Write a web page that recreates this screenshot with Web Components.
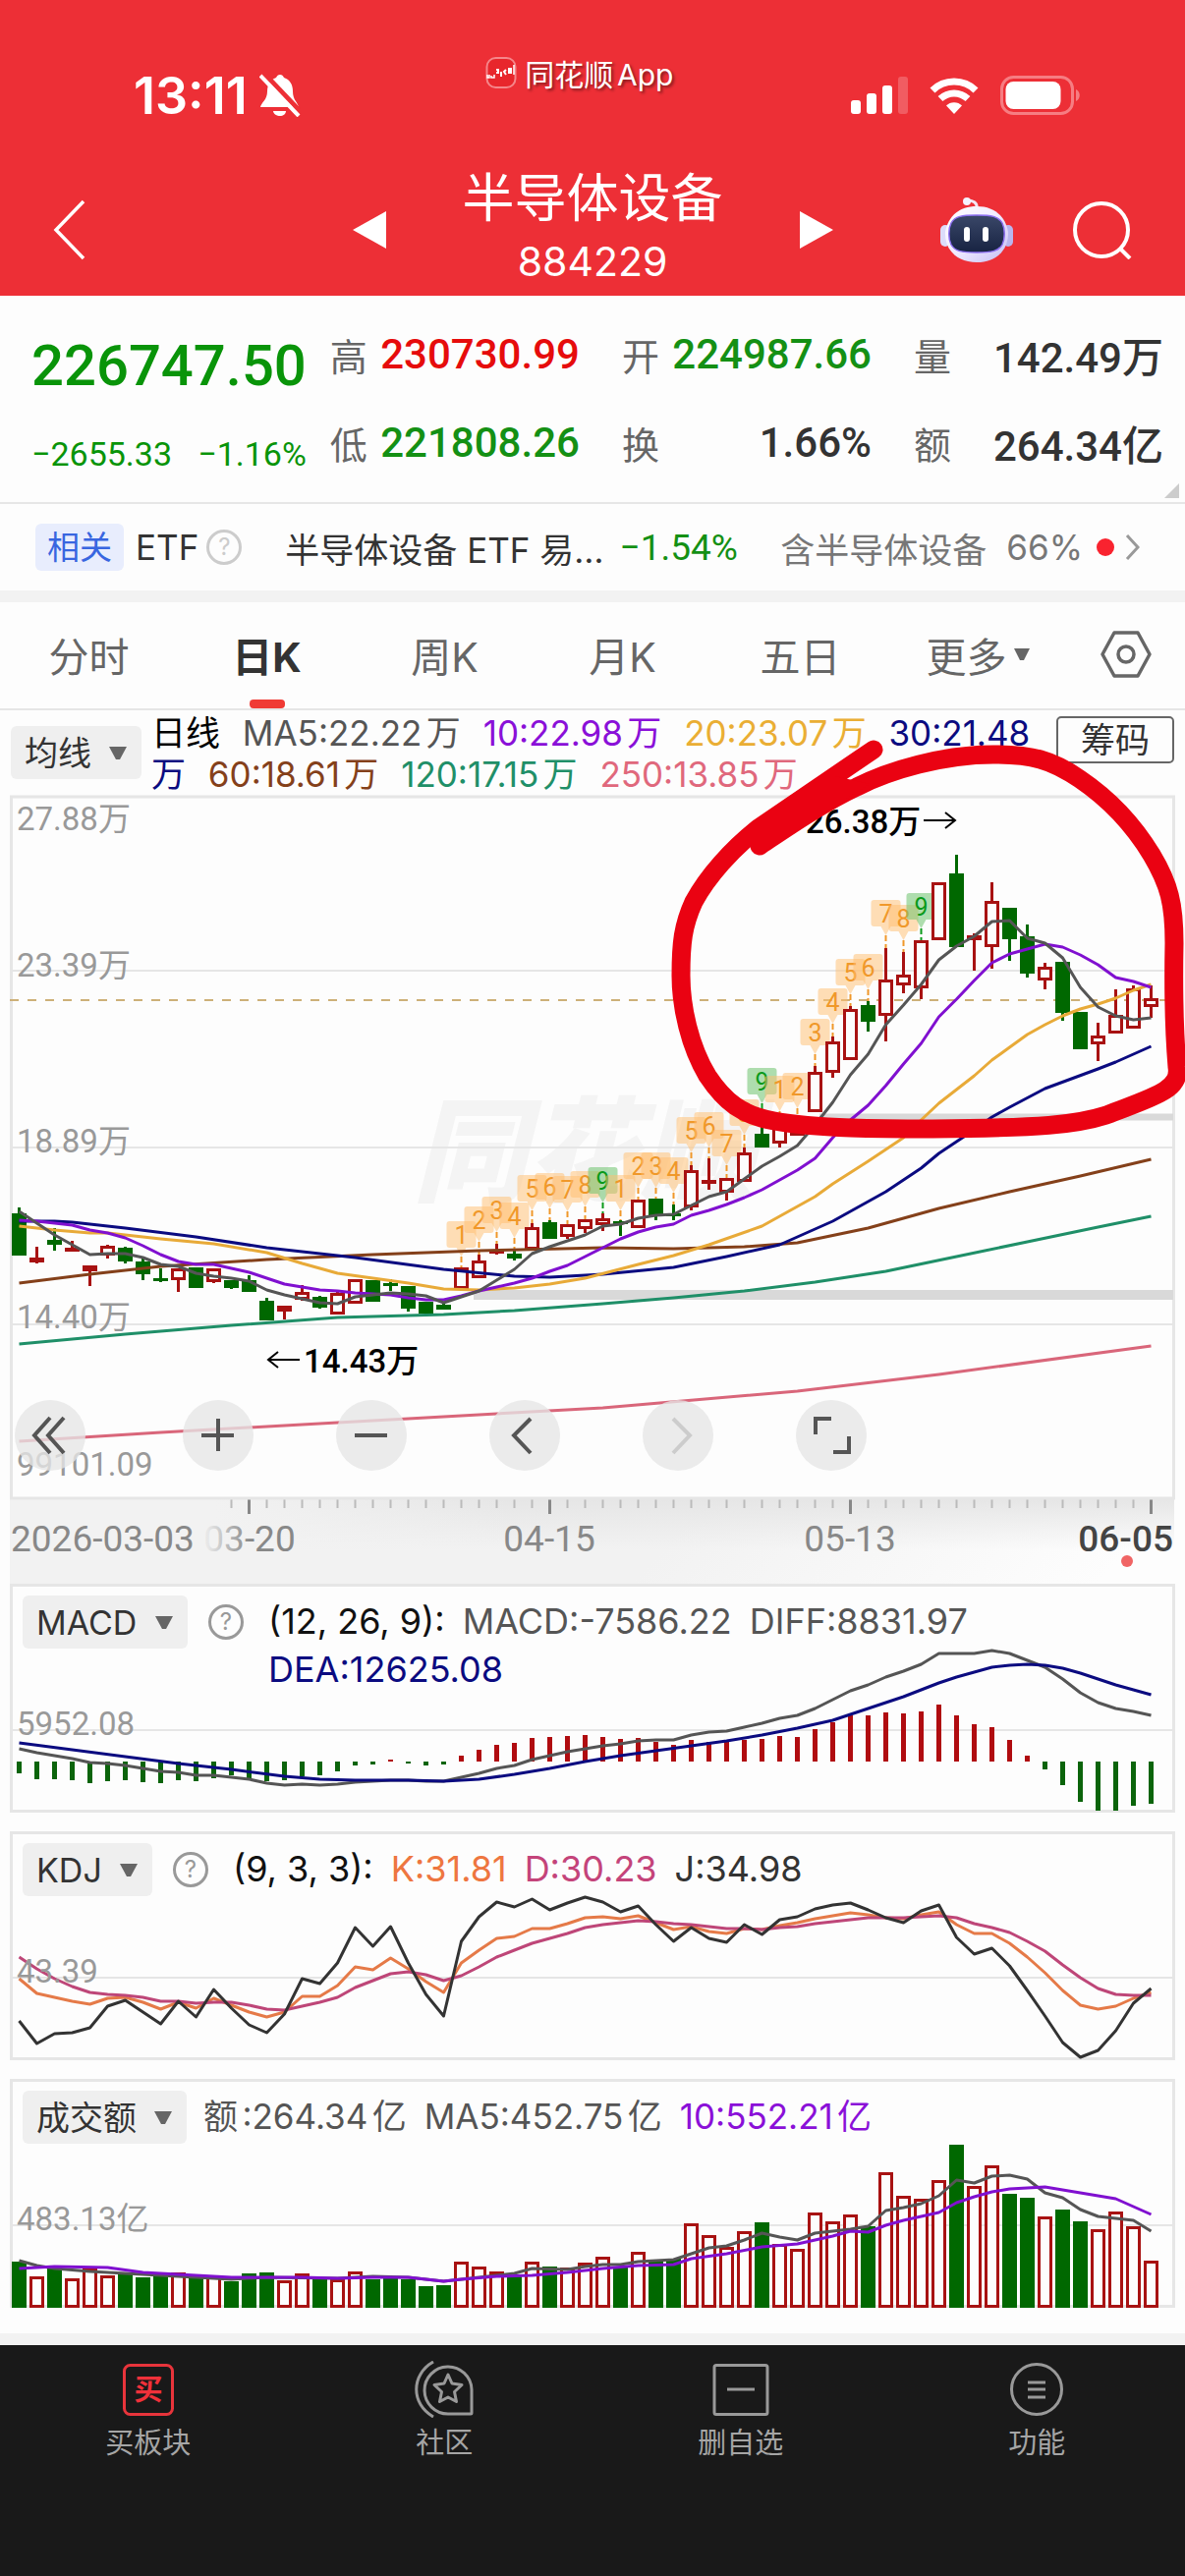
<!DOCTYPE html>
<html lang="zh-CN">
<head>
<meta charset="utf-8">
<meta name="viewport" content="width=device-width, initial-scale=1">
<title>半导体设备 884229</title>
<style>
    body {
        margin: 0;
        min-height: 100vh;
        display: flex;
        flex-direction: column;
        background: #fdfdfd;
        color: #333;
        font-family: Inter, "Noto Sans CJK SC", sans-serif;
        text-autospace: normal;
        overflow-x: hidden;
        --red: #ed2f36;
        --up: #a81212;
        --down: #006800;
        --line: #e6e6e6;
        --num: Roboto, "Noto Sans CJK SC", sans-serif;
    }
</style>
</head>
<body>
<status-bar time="13:11">同花顺App</status-bar>
<stock-header name="半导体设备" code="884229"></stock-header>
<quote-board></quote-board>
<related-row></related-row>
<period-tabs></period-tabs>
<ma-legend></ma-legend>
<kline-chart></kline-chart>
<date-axis></date-axis>
<indicator-panel name="MACD" kind="macd" help level="5952.08">
    <span style="color:#111">(12, 26, 9):</span>
    <span style="color:#555">MACD:-7586.22</span>
    <span style="color:#555">DIFF:8831.97</span>
    <span style="color:#0b0b80">DEA:12625.08</span>
</indicator-panel>
<indicator-panel name="KDJ" kind="kdj" help level="43.39">
    <span style="color:#111">(9, 3, 3):</span>
    <span style="color:#ee7640">K:31.81</span>
    <span style="color:#c4447a">D:30.23</span>
    <span style="color:#333">J:34.98</span>
</indicator-panel>
<indicator-panel name="成交额" kind="volume" level="483.13亿">
    <span style="color:#555">额:264.34亿</span>
    <span style="color:#555">MA5:452.75亿</span>
    <span style="color:#8a10d8">10:552.21亿</span>
</indicator-panel>
<tab-bar></tab-bar>

<script>
// ---- chart data: one entry per trading day, y values in chart units ----

const STEP = 18;
const FIRST = 19.5;
const px = i => FIRST + i * STEP;

// [direction, body top, body bottom, high, low]
const candles = [
    ['d',425,468,419,468],['u',470,475,459,476],['d',452,457,440,463],['u',460,463,453,463],['u',478,484,478,499],
    ['u',458,468,457,471],['d',460,474,459,476],['d',474,487,470,493],['d',491,494,481,495],['u',481,493,481,505],
    ['d',480,501,480,501],['u',481,495,481,496],['d',493,501,493,502],['d',493,505,488,505],['d',514,534,511,534],
    ['u',519,525,519,533],['u',505,513,498,514],['d',510,521,509,522],['u',506,528,504,528],['u',492,517,492,517],
    ['d',493,515,493,515],['d',496,499,492,504],['d',499,522,499,525],['d',515,527,515,527],['d',518,523,515,523],
    ['u',480,502,480,502],['u',473,491,467,491],['u',462,465,456,467],['d',466,471,463,473],['u',439,462,435,462],
    ['d',434,451,432,451],['u',436,449,436,451],['u',431,441,431,445],['u',430,437,425,443],['d',433,436,432,448],
    ['u',411,440,411,440],['d',410,427,410,432],['d',425,428,416,432],['u',381,419,376,422],['u',391,395,369,401],
    ['u',389,404,389,412],['u',363,393,358,393],['d',344,358,335,358],['u',336,354,336,358],['u',327,346,327,346],
    ['u',281,322,275,322],['u',250,282,245,287],['u',217,269,214,269],['d',213,230,209,240],['u',187,224,155,250],
    ['u',182,193,159,201],['u',147,196,147,207],['u',88,147,88,147],['d',79,154,60,154],['u',142,147,140,178],
    ['u',107,154,88,176],['d',114,146,114,168],['d',143,181,131,185],['u',174,188,170,197],['d',169,221,169,229],
    ['d',220,258,220,258],['u',244,253,231,270],['u',223,242,197,242],['u',196,237,193,237],['u',206,215,193,226]
];

const priceLines = [
    ['#d9667a', [[0,657],[8,648],[16,640],[24,632],[33,623],[44,606],[52,589],[64,560]]],
    ['#1f8f68', [[0,558],[6,548],[12,539],[18,531],[24,528],[28,524],[33,517],[37,511],[41,504],[45,495],[49,484],[53,469],[57,454],[61,439],[64,428]]],
    ['#84401a', [[0,496],[4,487],[8,479],[14,472],[20,467],[26,463],[33,460],[37,461],[41,459],[44,455],[48,440],[52,420],[56,403],[60,387],[64,370]]],
    ['#0b0b80', [[0,433],[2,433],[3,434],[6,440],[10,449],[14,460],[19,470],[24,482],[28,489],[30,490],[33,487],[37,480],[40,469],[43,457],[44,449],[46,433],[49,403],[51,379],[52,364],[53,352],[54,340],[55,327],[56,317],[58,298],[61,278],[62,271],[64,255]]],
    ['#e8aa38', [[0,438],[2,442],[4,445],[5,445],[8,451],[11,456],[14,465],[16,476],[18,486],[20,491],[22,496],[24,502],[26,503],[28,501],[30,497],[32,491],[35,477],[37,468],[39,457],[42,438],[45,408],[46,395],[48,372],[50,348],[51,330],[52,313],[53,299],[54,285],[55,269],[56,256],[57,243],[58,233],[59,224],[60,217],[61,212],[62,206],[63,198],[64,192]]],
    ['#8010d0', [432,433,435,437,442,445,450,458,467,474,477,477,481,485,491,497,500,503,504,506,507,508,511,513,513,509,504,500,496,491,484,478,469,460,451,444,439,436,427,422,416,409,401,391,381,369,348,330,315,295,273,252,225,207,188,170,161,156,151,154,162,172,185,189,195]],
    ['#555', [423,435,447,457,467,466,466,470,477,479,486,489,491,494,503,508,512,516,517,510,508,506,507,509,516,510,504,493,482,466,459,453,447,438,436,430,427,426,417,408,403,390,377,367,356,335,312,284,263,233,213,192,167,153,143,128,127,145,150,165,195,215,224,228,226]]
];

// nine-turn count tags: [day, count, tag top]
const counts = [
    [25,1,433],[26,2,418],[27,3,408],[28,4,414],[29,5,386],[30,6,384],[31,7,387],[32,8,382],[33,9,378],
    [34,1,386],[35,2,363],[36,3,363],[37,4,368],[38,5,327],[39,6,322],[40,7,340],[41,8,309],[42,9,277],
    [43,1,285],[44,2,282],[45,3,227],[46,4,196],[47,5,166],[48,6,161],[49,7,106],[50,8,111],[51,9,99]
];

const macd = {
    zero: 181,
    bars: [193,199,199,200,203,201,200,202,203,200,201,198,195,198,201,200,196,195,191,185,184,179,183,185,184,175,169,164,162,157,156,155,154,156,158,157,161,164,159,161,161,159,158,155,156,148,141,134,134,131,132,130,123,134,143,146,159,175,189,205,222,231,231,226,224],
    lines: [
        ['#555', [168,172,175,178,182,183,185,188,191,192,195,195,197,199,203,205,204,205,204,202,201,200,200,201,201,197,193,188,185,179,175,171,168,165,163,160,159,159,154,151,150,146,142,137,134,127,118,109,103,95,89,82,71,71,71,68,71,78,85,97,111,121,127,130,134]],
        ['#0b0b80', [[0,162],[3,169],[6,176],[9,183],[12,189],[15,196],[17,199],[19,200],[22,200],[24,201],[26,199],[28,194],[30,188],[32,181],[34,175],[36,170],[38,165],[40,160],[42,154],[44,147],[46,139],[48,127],[50,115],[52,101],[53,95],[54,90],[55,85],[56,83],[57,82],[58,83],[59,86],[60,91],[61,97],[62,103],[63,108],[64,113]]]
    ]
};

const kdj = {
    lines: [
        ['#e57a48', [150,165,169,173,176,170,169,174,181,174,180,170,177,184,189,184,168,168,157,138,141,129,140,153,164,134,121,109,107,99,99,94,88,87,89,86,93,100,97,102,104,99,100,96,93,89,86,83,85,88,89,85,82,95,104,104,114,128,144,162,177,181,178,170,164]],
        ['#be4678', [128,140,150,158,164,166,167,169,173,173,175,174,174,177,181,182,178,174,169,159,152,145,143,146,152,147,138,128,121,114,109,104,98,95,93,91,92,94,95,97,99,99,100,98,97,94,92,90,88,88,88,87,86,88,94,98,103,112,122,136,149,160,166,167,167]],
        ['#333', [193,216,206,205,200,178,172,184,196,173,189,161,180,197,205,186,150,155,134,98,117,97,134,166,188,112,87,72,77,69,80,73,67,72,82,76,95,112,98,109,113,95,105,90,87,79,75,73,80,88,93,81,75,108,125,119,137,162,188,215,230,223,203,175,160]]
    ]
};

const volume = {
    base: 233,
    bars: 'd186 u201 d192 u203 u192 u200 d198 d202 d200 u197 d203 u201 d206 d198 d197 u205 u198 d204 u204 u196 d204 d203 d204 d211 d210 u186 u191 u196 d201 u186 d191 u192 u187 u181 d191 u176 d186 d183 u147 u159 u171 u155 d146 u168 u173 u136 u145 u138 d150 u95 u119 u122 u103 d67 u109 u88 d117 d121 u140 d133 d145 u153 u135 u150 u185'.split(' '),
    lines: [
        ['#555', [[0,185],[1,190],[2,193],[4,196],[6,198],[8,200],[10,202],[12,204],[14,202],[18,203],[20,201],[22,202],[24,206],[25,204],[27,200],[28,198],[29,193],[31,194],[32,191],[33,189],[34,189],[35,186],[37,184],[38,178],[39,172],[40,170],[41,164],[42,157],[43,161],[44,164],[45,157],[46,155],[47,153],[48,150],[49,134],[50,131],[51,127],[52,119],[53,103],[54,106],[55,99],[56,98],[57,102],[58,116],[59,121],[60,133],[61,140],[62,142],[63,144],[64,155]]],
        ['#8010d0', [[0,193],[2,191],[5,192],[7,197],[10,200],[12,202],[16,202],[18,203],[20,202],[22,202],[24,206],[25,204],[27,201],[29,200],[31,197],[33,193],[35,190],[37,189],[38,183],[40,178],[42,171],[44,168],[46,160],[47,155],[48,156],[49,149],[50,144],[51,140],[52,136],[53,126],[54,120],[55,115],[56,112],[57,111],[58,110],[59,113],[60,116],[62,122],[64,138]]]
    ]
};

// ---- drawing helpers ----

function drawLine([color, points]) {
    const pts = points.map((p, i) => Array.isArray(p) ? `${px(p[0])},${p[1]}` : `${px(i)},${p}`).join(' ');
    return `<polyline points="${pts}" fill="none" stroke="${color}" stroke-width="3" stroke-linejoin="round"/>`;
}

function drawCandle([dir, top, bottom, high, low], i) {
    const x = px(i);
    if (dir === 'd') {
        return `<path d="M${x} ${high}V${low}" stroke="var(--down)" stroke-width="3"/>
            <rect x="${x - 7.5}" y="${top}" width="15" height="${bottom - top}" fill="var(--down)"/>`;
    }
    const h = Math.max(bottom - top - 3, 1);
    return `<path d="M${x} ${high}V${top}M${x} ${bottom}V${low}" stroke="var(--up)" stroke-width="3"/>
        <rect x="${x - 6}" y="${top + 1.5}" width="12" height="${h}" fill="#fdfdfd" stroke="var(--up)" stroke-width="3"/>`;
}

function drawCount([i, n, top]) {
    const x = px(i);
    const nine = n === 9;
    const color = nine ? '#0a9a1a' : '#f0982a';
    const fill = nine ? 'rgba(110,195,110,.55)' : 'rgba(255,190,110,.5)';
    return `<path d="M${x - 12} ${top}h24q3 0 3 3v21q0 3 -3 3h-7l-5 9l-5 -9h-7q-3 0 -3 -3v-21q0 -3 3 -3z" fill="${fill}"/>
        <path d="M${x} ${top + 36}V${candles[i][3]}" stroke="${color}" stroke-width="2" stroke-dasharray="6 3"/>
        <text x="${x}" y="${top + 23}" font-size="25" text-anchor="middle" fill="${color}">${n}</text>`;
}

// ---- elements ----

class StatusBar extends HTMLElement {
    constructor() {
        super();
        this.attachShadow({ mode: 'open' });
    }

    connectedCallback() {
        this.shadowRoot.innerHTML = `
        <style>
            :host {
                display: flex;
                justify-content: space-between;
                align-items: center;
                height: 150px;
                padding: 22px 106px 0 136px;
                background: var(--red);
                color: #fff;
            }
            .side { display: flex; align-items: center; gap: 22px; }
            .time { font-size: 52px; font-weight: 600; }
            .left { gap: 12px; }
            .brand {
                display: flex;
                align-items: center;
                gap: 8px;
                margin-bottom: 46px;
                padding-left: 8px;
                font-size: 30px;
                text-shadow: 2px 2px 3px rgba(0,0,0,.45);
            }
            svg { display: block; }
        </style>
        <div class="side left">
            <span class="time">${this.getAttribute('time')}</span>
            <svg width="42" height="44" viewBox="0 0 42 44">
                <path d="M21 1c2 0 3 1 4 3c6 2 9 7 9 14c0 9 5 11 6 16H1c1-5 7-7 7-16c0-7 3-12 9-14c1-2 2-3 4-3z" fill="#fff"/>
                <path d="M14 38h13c0 3-3 5-6 5s-7-2-7-5z" fill="#fff"/>
                <path d="M5 0L43 40" stroke="#ed2f36" stroke-width="5"/>
                <path d="M1 2L40 43" stroke="#fff" stroke-width="4"/>
            </svg>
        </div>
        <div class="brand">
            <svg width="32" height="34" viewBox="0 0 32 34">
                <rect x="1.500" y="2" width="29" height="30" rx="9" fill="#e8262c" stroke="#f5868a" stroke-width="2"/>
                <path d="M2 19v3h2v-3M6 20v2h3v-3" fill="none" stroke="#fff" stroke-width="1.500"/>
                <path d="M11 14h2v3h-2M16 16v5M21 14l-2 2l2 3" fill="none" stroke="#fff" stroke-width="2"/>
                <path d="M25 12v6" stroke="#fff" stroke-width="4"/>
                <path d="M29 9v10" stroke="#fff" stroke-width="1.500"/>
            </svg>
            <slot></slot>
        </div>
        <div class="side">
            <svg width="58" height="38" viewBox="0 0 58 38" fill="#fff">
                <rect x="0" y="24" width="10" height="14" rx="3"/>
                <rect x="16" y="17" width="10" height="21" rx="3"/>
                <rect x="32" y="9" width="10" height="29" rx="3"/>
                <rect x="48" y="0" width="10" height="38" rx="3" opacity=".22"/>
            </svg>
            <svg width="50" height="37" viewBox="0 0 50 37" fill="none" stroke="#fff">
                <path d="M3 13C15 1 35 1 47 13" stroke-width="7"/>
                <path d="M11 21.500C19 14 31 14 39 21.500" stroke-width="7"/>
                <path d="M25 37l-8-8.500c4-4.500 12-4.500 16 0z" fill="#fff" stroke="none"/>
            </svg>
            <svg width="82" height="40" viewBox="0 0 82 40">
                <rect x="1.500" y="1.500" width="72" height="37" rx="12" fill="none" stroke="#f67d82" stroke-width="3"/>
                <rect x="5.500" y="6" width="56" height="28" rx="8" fill="#fff"/>
                <path d="M77 14c5 2 5 10 0 12z" fill="#f67d82"/>
            </svg>
        </div>`;
    }
}
customElements.define('status-bar', StatusBar);

class StockHeader extends HTMLElement {
    constructor() {
        super();
        this.attachShadow({ mode: 'open' });
    }

    connectedCallback() {
        this.shadowRoot.innerHTML = `
        <style>
            :host {
                display: grid;
                grid-template-columns: 1fr auto 1fr;
                align-items: center;
                padding: 0 54px 5px;
                background: var(--red);
                color: #fff;
            }
            button { padding: 0; border: 0; background: none; }
            svg { display: block; }
            .center { display: flex; align-items: center; gap: 78px; }
            .title { display: grid; gap: 4px; text-align: center; }
            h1 { margin: 0; font-size: 53px; font-weight: 400; line-height: 60px; }
            .code { font-size: 41px; line-height: 60px; }
            .right { display: flex; align-items: center; justify-content: flex-end; gap: 61px; }
        </style>
        <button aria-label="返回">
            <svg width="34" height="62" viewBox="0 0 34 62"><path d="M31 2L3 31L31 60" fill="none" stroke="#fff" stroke-width="3.500"/></svg>
        </button>
        <div class="center">
            <button aria-label="上一个"><svg width="34" height="38" viewBox="0 0 34 38"><path d="M34 0v38L0 19z" fill="#fff"/></svg></button>
            <div class="title">
                <h1>${this.getAttribute('name')}</h1>
                <span class="code">${this.getAttribute('code')}</span>
            </div>
            <button aria-label="下一个"><svg width="34" height="38" viewBox="0 0 34 38"><path d="M0 0v38l34-19z" fill="#fff"/></svg></button>
        </div>
        <div class="right">
            <button aria-label="智能助手">
                <svg width="74" height="68" viewBox="0 0 74 68">
                    <defs>
                        <linearGradient id="head" x1="0" y1="0" x2="1" y2="1">
                            <stop offset="0" stop-color="#fff"/><stop offset=".5" stop-color="#f1ebff"/><stop offset="1" stop-color="#c3bdf5"/>
                        </linearGradient>
                        <linearGradient id="face" x1="0" y1="0" x2="0" y2="1">
                            <stop offset="0" stop-color="#3a4768"/><stop offset="1" stop-color="#172342"/>
                        </linearGradient>
                    </defs>
                    <path d="M37 12c1-6-4-8-10-8" fill="none" stroke="#f3e6f4" stroke-width="3"/>
                    <circle cx="27" cy="5" r="4" fill="#f6f2ff"/>
                    <rect x="0" y="29" width="10" height="22" rx="5" fill="#dcdcfa"/>
                    <rect x="64" y="29" width="10" height="22" rx="5" fill="#b9b6ee"/>
                    <path d="M37 10c18 0 29 10 32 26c1 18-12 31-32 31S4 54 5 36C8 20 19 10 37 10z" fill="url(#head)"/>
                    <path d="M37 19c15 0 22 1 26 8c3 6 3 16 0 22c-4 7-11 8-26 8s-22-1-26-8c-3-6-3-16 0-22c4-7 11-8 26-8z"
                        fill="url(#face)" stroke="#8c6ff0" stroke-width="1.500"/>
                    <rect x="24" y="31" width="6" height="15" rx="3" fill="#fff"/>
                    <rect x="43" y="31" width="6" height="15" rx="3" fill="#fff"/>
                </svg>
            </button>
            <button aria-label="搜索">
                <svg width="60" height="60" viewBox="0 0 60 60" fill="none" stroke="#fff" stroke-width="4">
                    <circle cx="29" cy="30" r="27"/><path d="M48 49l10 10"/>
                </svg>
            </button>
        </div>`;
    }
}
customElements.define('stock-header', StockHeader);

class QuoteBoard extends HTMLElement {
    constructor() {
        super();
        this.attachShadow({ mode: 'open' });
    }

    connectedCallback() {
        const stats = [
            ['高', '230730.99', 'up'], ['开', '224987.66', 'down'], ['量', '142.49万', ''],
            ['低', '221808.26', 'down'], ['换', '1.66%', ''], ['额', '264.34亿', '']
        ];
        this.shadowRoot.innerHTML = `
        <style>
            :host {
                display: flex;
                position: relative;
                gap: 24px;
                padding: 14px 22px 16px 32px;
                border-bottom: 2px solid var(--line);
                font-family: var(--num);
                text-autospace: no-autospace;
            }
            .main { color: #099409; font-weight: 500; white-space: nowrap; }
            .price { font-size: 58px; line-height: 114px; }
            .change { display: flex; justify-content: space-between; font-size: 34px; line-height: 66px; font-weight: 400; }
            .stats {
                flex: 1;
                margin: 0;
                display: grid;
                grid-template-columns: repeat(3, 1fr);
                column-gap: 43px;
                grid-auto-rows: 90px;
                align-content: start;
                align-items: center;
            }
            .stats div { display: flex; justify-content: space-between; align-items: center; white-space: nowrap; }
            dt { font-size: 38px; color: #666; }
            dd { margin: 0; font-size: 42px; font-weight: 500; }
            .up { color: #e60c0c; }
            .down { color: #149014; }
            .more { position: absolute; right: 6px; bottom: 4px; }
        </style>
        <div class="main">
            <div class="price">226747.50</div>
            <div class="change"><span>−2655.33</span><span>−1.16%</span></div>
        </div>
        <dl class="stats">${stats.map(([k, v, c]) => `<div><dt>${k}</dt><dd class="${c}">${v}</dd></div>`).join('')}</dl>
        <svg class="more" width="15" height="15" viewBox="0 0 15 15"><path d="M15 0v15H0z" fill="#ccc"/></svg>`;
    }
}
customElements.define('quote-board', QuoteBoard);

class HelpIcon extends HTMLElement {
    constructor() {
        super();
        this.attachShadow({ mode: 'open' });
    }

    connectedCallback() {
        this.shadowRoot.innerHTML = `
        <style>
            :host { display: block; color: #999; }
            button {
                display: block;
                box-sizing: border-box;
                width: 36px;
                height: 36px;
                padding: 0;
                border: 3px solid currentColor;
                border-radius: 50%;
                background: none;
                color: inherit;
                font: 24px/30px Inter, sans-serif;
            }
        </style>
        <button aria-label="说明">?</button>`;
    }
}
customElements.define('help-icon', HelpIcon);

class RelatedRow extends HTMLElement {
    constructor() {
        super();
        this.attachShadow({ mode: 'open' });
    }

    connectedCallback() {
        this.shadowRoot.innerHTML = `
        <style>
            :host {
                display: flex;
                align-items: center;
                height: 88px;
                padding: 0 46px 0 36px;
                border-bottom: 12px solid #f2f2f2;
                font-size: 35px;
                white-space: nowrap;
            }
            .tag {
                margin-right: 12px;
                padding: 0 12px;
                border-radius: 6px;
                background: #e8edfd;
                color: #3866e0;
                font-size: 33px;
                line-height: 48px;
            }
            help-icon { margin: 0 44px 0 8px; color: #ccc; }
            a { color: inherit; text-decoration: none; }
            .fall { margin-left: 16px; color: #149014; font-family: var(--num); font-size: 37px; }
            .hold { display: flex; align-items: center; margin-left: auto; color: #777; }
            .hold span { margin-left: 20px; }
            .dot { width: 18px; height: 18px; margin: 0 11px 0 14px; border-radius: 50%; background: #f9232f; }
        </style>
        <span class="tag">相关</span>
        <span>ETF</span>
        <help-icon></help-icon>
        <a href="#etf">半导体设备 ETF 易…</a>
        <span class="fall">−1.54%</span>
        <a class="hold" href="#holding">含半导体设备<span>66%</span><i class="dot"></i>
            <svg width="15" height="28" viewBox="0 0 15 28"><path d="M2 2l11 12L2 26" fill="none" stroke="#999" stroke-width="3"/></svg>
        </a>`;
    }
}
customElements.define('related-row', RelatedRow);

class PeriodTabs extends HTMLElement {
    constructor() {
        super();
        this.attachShadow({ mode: 'open' });
    }

    connectedCallback() {
        const tabs = ['分时', '日K', '周K', '月K', '五日'];
        this.shadowRoot.innerHTML = `
        <style>
            :host { display: flex; height: 108px; border-bottom: 2px solid var(--line); text-autospace: no-autospace; }
            button {
                display: flex;
                flex: 1;
                align-items: center;
                justify-content: center;
                gap: 6px;
                position: relative;
                padding: 0 0 2px;
                border: 0;
                background: none;
                color: #666;
                font: inherit;
                font-size: 41px;
            }
            .on { color: #333; font-weight: 700; }
            .on::after {
                content: "";
                position: absolute;
                bottom: 0;
                width: 36px;
                height: 9px;
                border-radius: 4px;
                background: #f03a34;
            }
            .set { flex: 0 0 120px; }
        </style>
        ${tabs.map(t => `<button class="${t === '日K' ? 'on' : ''}">${t}</button>`).join('')}
        <button>更多<svg width="18" height="14" viewBox="0 0 18 14"><path d="M1 1h16L11 13H7z" fill="#666"/></svg></button>
        <button class="set" aria-label="设置">
            <svg width="52" height="48" viewBox="0 0 52 48" fill="none" stroke="#666" stroke-width="3.500" stroke-linejoin="round">
                <path d="M2 24L14 2h24l12 22l-12 22H14z"/><circle cx="26" cy="24" r="8"/>
            </svg>
        </button>`;
    }
}
customElements.define('period-tabs', PeriodTabs);

class IndicatorSelect extends HTMLElement {
    constructor() {
        super();
        this.attachShadow({ mode: 'open' });
    }

    connectedCallback() {
        const name = this.getAttribute('name');
        this.shadowRoot.innerHTML = `
        <style>
            :host { display: block; position: relative; flex: none; }
            select {
                appearance: none;
                display: block;
                height: 54px;
                padding: 0 51px 0 14px;
                border: 0;
                border-radius: 6px;
                background: #efefef;
                color: #333;
                font: inherit;
                font-size: 34px;
            }
            svg { position: absolute; right: 14px; top: 20px; pointer-events: none; }
        </style>
        <select aria-label="指标"><option>${name}</option></select>
        <svg width="20" height="15" viewBox="0 0 20 15"><path d="M1 1h18L12 14H8z" fill="#666"/></svg>`;
    }
}
customElements.define('indicator-select', IndicatorSelect);

class MaLegend extends HTMLElement {
    constructor() {
        super();
        this.attachShadow({ mode: 'open' });
    }

    connectedCallback() {
        const items = [
            ['日线', '#000'], ['MA5:22.22万', '#555'], ['10:22.98万', '#8a10d8'], ['20:23.07万', '#eaae34'],
            ['30:21.48万', '#0b0b80'], ['60:18.61万', '#84401a'], ['120:17.15万', '#1f8f68'], ['250:13.85万', '#e0687c']
        ];
        this.shadowRoot.innerHTML = `
        <style>
            :host { display: flex; align-items: flex-start; height: 87px; padding: 0 11px; }
            indicator-select { margin-top: 16px; }
            p { flex: 1; margin: 2px 6px 0 10px; font-size: 35px; line-height: 42px; }
            span { margin-right: 13px; }
            button {
                flex: none;
                width: 120px;
                height: 48px;
                margin-top: 6px;
                padding: 0;
                border: 2px solid #666;
                border-radius: 5px;
                background: none;
                color: #333;
                font: inherit;
                font-size: 35px;
                line-height: 42px;
            }
        </style>
        <indicator-select name="均线"></indicator-select>
        <p>${items.map(([t, c]) => `<span style="color:${c}">${t}</span>`).join(' ')}</p>
        <button>筹码</button>`;
    }
}
customElements.define('ma-legend', MaLegend);

class ZoomBar extends HTMLElement {
    constructor() {
        super();
        this.attachShadow({ mode: 'open' });
    }

    connectedCallback() {
        const icons = [
            ['最早', 'M36 18L20 36l16 18M50 18L34 36l16 18'],
            ['放大', 'M36 19v33M19 36h33'],
            ['缩小', 'M19 36h33'],
            ['向左', 'M42 19L25 36l17 18'],
            ['向右', 'M31 19l17 17l-17 18'],
            ['全屏', 'M20 35V19h16M38 53h16V37']
        ];
        this.shadowRoot.innerHTML = `
        <style>
            :host { display: flex; gap: 84px; }
            button { padding: 0; border: 0; border-radius: 50%; background: rgba(230,230,230,.78); }
            button:first-of-type { margin-right: 15px; }
            svg { display: block; fill: none; stroke: #555; stroke-width: 4; }
            button:disabled svg { stroke: #ccc; }
        </style>
        ${icons.map(([label, d]) => `<button aria-label="${label}" ${label === '向右' ? 'disabled' : ''}>
            <svg width="72" height="72" viewBox="0 0 72 72"><path d="${d}"/></svg></button>`).join('')}`;
    }
}
customElements.define('zoom-bar', ZoomBar);

class KlineChart extends HTMLElement {
    constructor() {
        super();
        this.attachShadow({ mode: 'open' });
    }

    connectedCallback() {
        this.shadowRoot.innerHTML = `
        <style>
            :host { display: block; position: relative; z-index: 1; font-family: var(--num); text-autospace: no-autospace; }
            svg { display: block; width: 100%; overflow: visible; }
            zoom-bar { position: absolute; left: 15px; bottom: 29px; }
        </style>
        <svg viewBox="0 0 1206 716">
            <text x="420" y="404" font-size="116" font-weight="900" font-style="italic" fill="#f4f4f4">同花顺</text>
            <path d="M12 178H1194M12 358H1194M12 538H1194" stroke="#e6e6e6" stroke-width="2"/>
            <rect x="11.500" y="1" width="1183" height="714" fill="none" stroke="#e6e6e6" stroke-width="3"/>
            <path d="M482 508H1194" stroke="#d9d9d9" stroke-width="10"/>
            <path d="M834 327H1194" stroke="#d9d9d9" stroke-width="7"/>
            <path d="M10 208H1194" stroke="#cdb078" stroke-width="2" stroke-dasharray="9 9"/>
            <g font-size="33" fill="#999">
                <text x="17" y="35">27.88万</text>
                <text x="17" y="184">23.39万</text>
                <text x="17" y="363">18.89万</text>
                <text x="17" y="542">14.40万</text>
                <text x="17" y="692">99101.09</text>
            </g>
            ${counts.map(drawCount).join('')}
            ${candles.map(drawCandle).join('')}
            ${priceLines.map(drawLine).join('')}
            <g font-size="33" font-weight="500" fill="#000">
                <text x="820" y="38">26.38万</text>
                <text x="309" y="587">14.43万</text>
            </g>
            <path d="M940 25H971M962 17l10 8l-10 8M305 574H274M283 566l-10 8l10 8" fill="none" stroke="#000" stroke-width="2"/>
            <path d="M773 51C800 33 836 8 872 -9C905 -26 960 -42 1011 -42C1050 -42 1070 -37 1099 -17C1130 4 1155 32 1172 60
                C1190 90 1195 110 1195 150C1194 200 1195 240 1198 276C1202 300 1172 307 1126 325C1095 335 1060 338 949 339
                C900 339 830 339 788 331C755 325 738 312 720 285C702 255 693 215 693 183C693 150 695 132 706 108
                C720 82 745 54 773 32L889 -47" fill="none" stroke="#ea0212" stroke-width="19" stroke-linejoin="round" stroke-linecap="round"/>
            <path d="M765 48L850 -20L885 -12L776 58Z" fill="#ea0212"/>
        </svg>
        <zoom-bar></zoom-bar>`;
    }
}
customElements.define('kline-chart', KlineChart);

class DateAxis extends HTMLElement {
    constructor() {
        super();
        this.attachShadow({ mode: 'open' });
    }

    connectedCallback() {
        const majors = [13, 30, 47, 64];
        let ticks = '';
        for (let i = 12; i < 65; i++) {
            const major = majors.includes(i);
            ticks += `<path d="M${px(i)} 0V${major ? 15 : 9}" stroke="${major ? '#888' : '#bbb'}" stroke-width="${major ? 3 : 2}"/>`;
        }
        this.shadowRoot.innerHTML = `
        <style>
            :host { display: block; font-family: var(--num); }
            svg { display: block; width: 100%; }
        </style>
        <svg viewBox="0 0 1206 86">
            <defs>
                <linearGradient id="bg" x1="0" y1="0" x2="1" y2=".07">
                    <stop offset=".6" stop-color="#f2f2f2"/><stop offset="1" stop-color="#fdfdfd"/>
                </linearGradient>
                <linearGradient id="shade" x1="0" y1="0" x2="0" y2="1">
                    <stop offset="0" stop-color="#e6e6e6"/><stop offset=".6" stop-color="#e6e6e6" stop-opacity="0"/>
                </linearGradient>
                <linearGradient id="fade" x1="0" y1="0" x2="1" y2="0">
                    <stop offset=".05" stop-color="#888" stop-opacity=".1"/><stop offset=".5" stop-color="#888"/>
                </linearGradient>
                <linearGradient id="edge" x1="0" y1="0" x2="1" y2="0">
                    <stop offset="0" stop-color="#f2f2f2"/><stop offset="1" stop-color="#f2f2f2" stop-opacity="0"/>
                </linearGradient>
            </defs>
            <rect x="10" width="1185" height="86" fill="url(#bg)"/>
            <rect x="220" width="975" height="86" fill="url(#shade)"/>
            <rect x="219" width="300" height="86" fill="url(#edge)"/>
            ${ticks}
            <g font-size="37" fill="#888">
                <text x="11" y="53">2026-03-03</text>
                <text x="254" y="53" text-anchor="middle" fill="url(#fade)">03-20</text>
                <text x="559" y="53" text-anchor="middle">04-15</text>
                <text x="865" y="53" text-anchor="middle">05-13</text>
                <text x="1194" y="53" text-anchor="end" font-weight="500" fill="#444">06-05</text>
            </g>
            <circle cx="1147" cy="63" r="6" fill="#f06464"/>
        </svg>`;
    }
}
customElements.define('date-axis', DateAxis);

class IndicatorPanel extends HTMLElement {
    constructor() {
        super();
        this.attachShadow({ mode: 'open' });
    }

    plot() {
        const kind = this.getAttribute('kind');
        if (kind === 'macd') {
            const bars = macd.bars.map((y, i) =>
                `<path d="M${px(i)} ${macd.zero}V${y}" stroke="${y > macd.zero ? '#0b640b' : '#b00c10'}" stroke-width="5"/>`);
            return bars.join('') + macd.lines.map(drawLine).join('');
        }
        if (kind === 'kdj') {
            return kdj.lines.map(drawLine).join('');
        }
        const bars = volume.bars.map((b, i) => {
            const y = +b.slice(1);
            return b[0] === 'd'
                ? `<rect x="${px(i) - 7.5}" y="${y}" width="15" height="${volume.base - y}" fill="var(--down)"/>`
                : `<rect x="${px(i) - 6}" y="${y + 1.5}" width="12" height="${volume.base - y - 3}" fill="#fdfdfd" stroke="var(--up)" stroke-width="3"/>`;
        });
        return bars.join('') + volume.lines.map(drawLine).join('');
    }

    connectedCallback() {
        this.shadowRoot.innerHTML = `
        <style>
            :host { display: grid; margin-bottom: 19px; }
            svg { grid-area: 1 / 1; display: block; width: 100%; font-family: var(--num); text-autospace: no-autospace; }
            header {
                grid-area: 1 / 1;
                display: flex;
                align-items: flex-start;
                align-self: start;
                padding: 12px 12px 0 23px;
            }
            help-icon { margin: 9px 10px 0 21px; }
            .readings {
                display: flex;
                flex-wrap: wrap;
                column-gap: 18px;
                margin: 2px 0 0 17px;
                font-size: 35px;
                line-height: 49px;
            }
            help-icon + .readings { margin-left: 15px; font-size: 36px; }
        </style>
        <svg viewBox="0 0 1206 233">
            <path d="M12 149H1194" stroke="#e6e6e6" stroke-width="2"/>
            <rect x="11.500" y="1.500" width="1183" height="230" fill="none" stroke="#e6e6e6" stroke-width="3"/>
            ${this.plot()}
            <text x="17" y="154" font-size="33" fill="#999">${this.getAttribute('level')}</text>
        </svg>
        <header>
            <indicator-select name="${this.getAttribute('name')}"></indicator-select>
            ${this.hasAttribute('help') ? '<help-icon></help-icon>' : ''}
            <div class="readings"><slot></slot></div>
        </header>`;
    }
}
customElements.define('indicator-panel', IndicatorPanel);

class TabBar extends HTMLElement {
    constructor() {
        super();
        this.attachShadow({ mode: 'open' });
    }

    connectedCallback() {
        this.shadowRoot.innerHTML = `
        <style>
            :host {
                display: grid;
                grid-template-columns: repeat(4, 1fr);
                align-items: start;
                flex: 1;
                margin-top: 7px;
                padding-top: 16px;
                border-top: 12px solid #f2f2f2;
                background: #191919;
            }
            button {
                display: grid;
                justify-items: center;
                gap: 8px;
                padding: 0;
                border: 0;
                background: none;
                color: #a5a5a5;
                font: inherit;
                font-size: 29px;
                line-height: 36px;
            }
            svg { fill: none; stroke: #999; stroke-width: 3; }
        </style>
        <button>
            <svg width="60" height="58" viewBox="0 0 60 58">
                <rect x="5.500" y="4.500" width="49" height="50" rx="6" stroke="#e8343b"/>
                <text x="30" y="40" font-size="29" font-weight="700" text-anchor="middle" fill="#f0313a" stroke="none">买</text>
            </svg>买板块
        </button>
        <button>
            <svg width="60" height="58" viewBox="0 0 60 58">
                <path d="M19 1C-4 14-4 44 19 57"/>
                <path d="M58 29A24 24 0 1 0 34 54H57q1 0 1-1z"/>
                <path d="M34 14l4 9l10 1.500l-7.500 7l2 10L34 37l-8.500 4.500l2-10L20 24.500L30 23z" stroke-linejoin="round"/>
            </svg>社区
        </button>
        <button>
            <svg width="60" height="58" viewBox="0 0 60 58">
                <rect x="3" y="4.500" width="54" height="50" rx="2"/><path d="M16 29h28"/>
            </svg>删自选
        </button>
        <button>
            <svg width="60" height="58" viewBox="0 0 60 58">
                <circle cx="30" cy="29" r="25.500"/><path d="M21 22h18M21 29h18M21 37h18"/>
            </svg>功能
        </button>`;
    }
}
customElements.define('tab-bar', TabBar);
</script>
</body>
</html>
